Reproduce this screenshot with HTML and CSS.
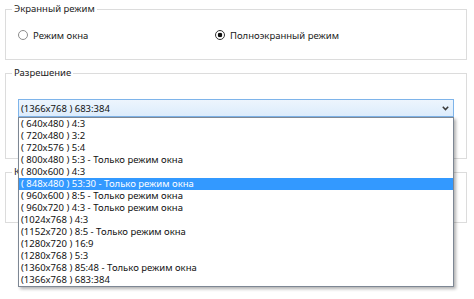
FILE: index.html
```html
<!DOCTYPE html>
<html lang="ru">
  <head>
    <meta charset="UTF-8" />
    <title>Настройки экрана</title>
    <link rel="stylesheet" href="styles.css">
  </head>
  <body>
    <div class="group group-mode">
      <div class="group-title">Экранный режим</div>
      <div class="radio-row">
        <label class="radio"><input type="radio" name="mode" /> Режим окна</label>
        <label class="radio"><input type="radio" name="mode" checked /> Полноэкранный режим</label>
      </div>
    </div>
    <div class="group group-res">
      <div class="group-title">Разрешение</div>
      <div class="combo">
        <div class="combo-box">
          <span>(1366x768 ) 683:384</span>
          <svg width="7" height="5" viewBox="0 0 7 5"><path d="M0.8 0.8 L3.5 3.6 L6.2 0.8" fill="none" stroke="#3a3a3a" stroke-width="1.5" /></svg>
        </div>
        <ul class="combo-list">
          <li>( 640x480 ) 4:3</li>
          <li>( 720x480 ) 3:2</li>
          <li>( 720x576 ) 5:4</li>
          <li>( 800x480 ) 5:3 - Только режим окна</li>
          <li>( 800x600 ) 4:3</li>
          <li class="selected">( 848x480 ) 53:30 - Только режим окна</li>
          <li>( 960x600 ) 8:5 - Только режим окна</li>
          <li>( 960x720 ) 4:3 - Только режим окна</li>
          <li>(1024x768 ) 4:3</li>
          <li>(1152x720 ) 8:5 - Только режим окна</li>
          <li>(1280x720 ) 16:9</li>
          <li>(1280x768 ) 5:3</li>
          <li>(1360x768 ) 85:48 - Только режим окна</li>
          <li>(1366x768 ) 683:384</li>
        </ul>
      </div>
    </div>
    <div class="group group-quality">
      <div class="group-title">Качество</div>
    </div>
  </body>
</html>
```

FILE: styles.css
```css
html {
  height: 100%;
}

body {
  min-height: 100%;
  box-sizing: border-box;
  margin: 0;
  padding: 9px 0 0 5px;
  font-family: 'Noto Sans', 'Open Sans', sans-serif;
  font-size: 9.5px;
  color: #1a1a1a;
  background-color: #ffffff;
}

.group {
  position: relative;
  width: 462px;
  box-sizing: border-box;
  margin-bottom: 13px;
  border: 1px solid #dcdcdc;
  padding: 17px 12px 16px;
}

/* title sits on the top border, like a legend */
.group-title {
  position: absolute;
  top: -9px;
  left: 6px;
  padding: 0 2px;
  line-height: 16px;
  background-color: #ffffff;
  color: #222;
}

.radio-row {
  display: grid;
  grid-template-columns: 197px auto;
  height: 16px;
  align-items: center;
}

.radio {
  display: flex;
  align-items: center;
}

.radio input {
  appearance: none;
  -webkit-appearance: none;
  width: 10px;
  height: 10px;
  margin: 0 5px 0 0;
  box-sizing: border-box;
  border: 1px solid #8c8c8c;
  border-radius: 50%;
  background-color: #fff;
}

.radio input:checked {
  border-color: #333;
  background: radial-gradient(circle, #111 0, #111 2px, #fff 2.6px);
}

.group-res {
  padding-top: 25px;
  padding-bottom: 41px;
}

.group-quality {
  height: 51px;
}

.combo {
  position: relative;
}

.combo-box {
  height: 18px;
  box-sizing: border-box;
  display: flex;
  align-items: center;
  justify-content: space-between;
  padding: 0 4px 0 2px;
  border: 1px solid #7eb4ea;
  background: linear-gradient(#edf5fd, #dcecfc);
  color: #111;
}

.combo-list {
  position: absolute;
  top: 18px;
  left: 0;
  width: 100%;
  box-sizing: border-box;
  margin: 0;
  padding: 0;
  list-style: none;
  border: 1px solid #7d8794;
  background-color: #fff;
  box-shadow: 2px 2px 3px rgba(0, 0, 0, 0.3);
  z-index: 1;
}

.combo-list li {
  height: 12px;
  line-height: 12px;
  padding-left: 2px;
  color: #111;
  white-space: nowrap;
}

.combo-list li.selected {
  background-color: #3399ff;
  color: #fff;
}
```
